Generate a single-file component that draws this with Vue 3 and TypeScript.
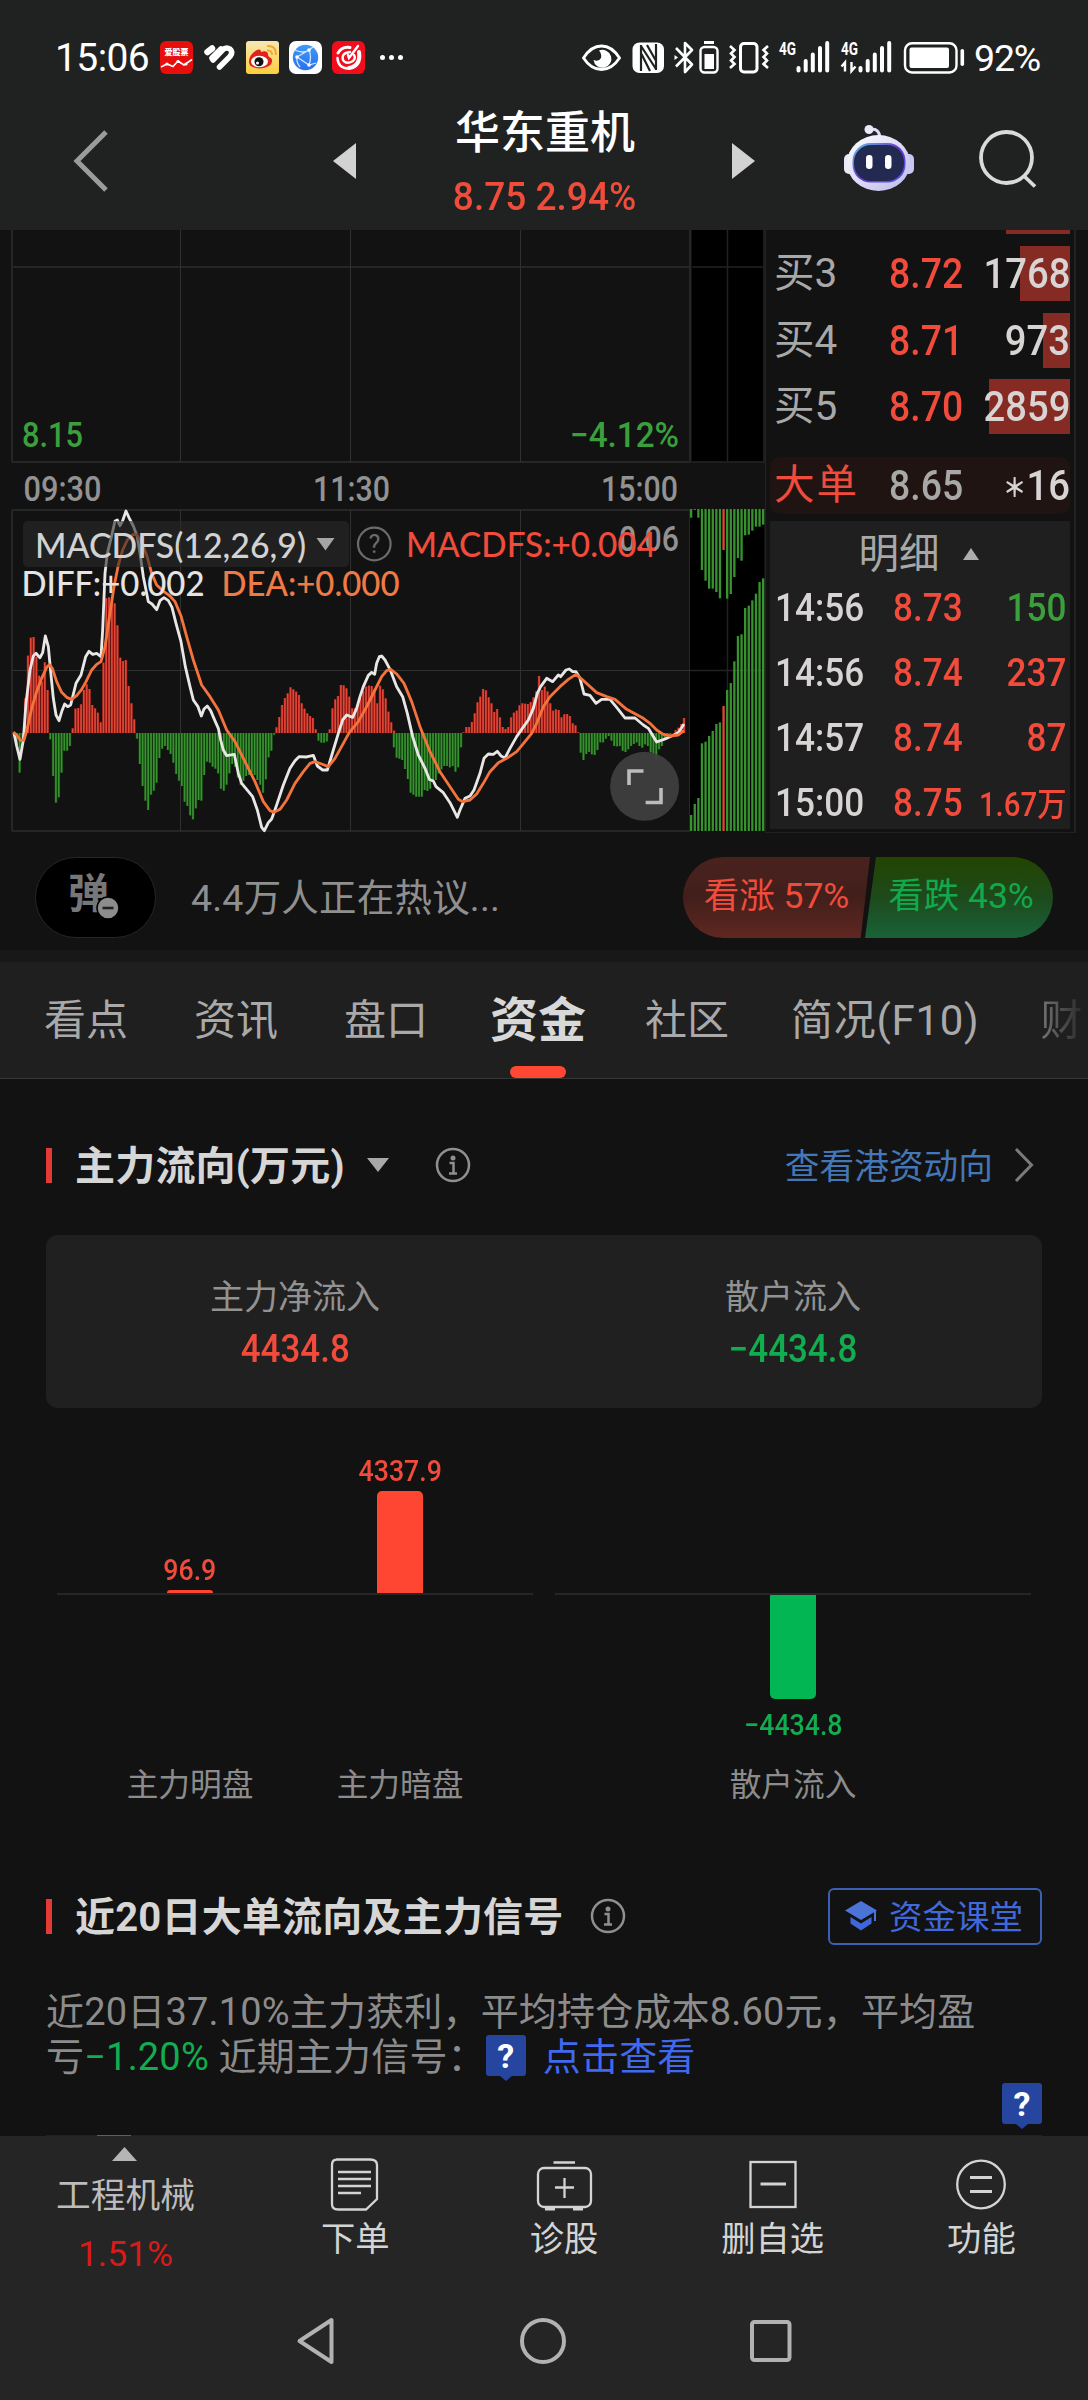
<template>
  <div class="phone">
    <!-- 系统状态栏 -->
    <div class="status-bar">
      <span class="clock">15:06</span>
      <svg class="notify-icons" width="246" height="36" viewBox="160 40 246 36">
        <defs>
          <linearGradient id="weiboBg" x1="0" y1="0" x2="0" y2="1">
            <stop offset="0" stop-color="#f7e7b5" />
            <stop offset="1" stop-color="#fdcf3c" />
          </linearGradient>
          <linearGradient id="globeBg" x1="0" y1="0" x2="0" y2="1">
            <stop offset="0" stop-color="#3f9bf5" />
            <stop offset="1" stop-color="#2a6ff0" />
          </linearGradient>
        </defs>
        <rect x="160" y="41" width="33" height="33" rx="6" fill="#e60f0c" />
        <text x="176.500" y="55" class="tiny-logo" text-anchor="middle">爱股票</text>
        <path d="M161 67 L167 64 L173 66.500 L178 61 L184 65 L192 59.500" fill="none" stroke="#fff" stroke-width="1.600" />
        <circle cx="167" cy="64" r="1.600" fill="#fff" />
        <circle cx="178" cy="61.500" r="1.600" fill="#fff" />
        <circle cx="186" cy="64" r="1.600" fill="#fff" />
        <g stroke="#fff" stroke-width="6.500" stroke-linecap="round" fill="none">
          <path d="M207.500 52 L212 48.500" />
          <path d="M212.500 58 L221 49.500" />
          <path d="M219.500 67 L230 56.500 Q233.500 52 230 49 Q226 46.500 222.500 50 L213 60" stroke-width="5.500" />
        </g>
        <rect x="246" y="41" width="33" height="33" rx="3" fill="url(#weiboBg)" />
        <path d="M249 62 Q249 55 256 50.500 Q261 48 261 52 Q267 50 268 54 Q268 57 271 58 Q274 62 269 66 Q262 70 254 67.500 Q249 66 249 62Z" fill="#e0211c" />
        <ellipse cx="259.500" cy="61.500" rx="8.500" ry="5.800" fill="#fff" />
        <circle cx="259" cy="61.800" r="4.500" fill="#111" />
        <circle cx="257.500" cy="63" r="1.500" fill="#fff" />
        <path d="M267 46 Q276 45 276 55 M267 50.500 Q272 50 272 55" fill="none" stroke="#f2a82b" stroke-width="2" />
        <rect x="289" y="41" width="33" height="33" rx="7" fill="#fff" />
        <circle cx="305.500" cy="57.500" r="12.700" fill="url(#globeBg)" />
        <path d="M295 50 Q303 54 309 50 L313 47 M309 50 Q312 57 309 65 M297 57 L309 65 L316 63 M297 57 L309 50 M297 57 Q296 62 300 67" fill="none" stroke="#cfe6ff" stroke-width="1.300" />
        <circle cx="309" cy="50" r="1.800" fill="#fff" />
        <circle cx="297" cy="57" r="1.800" fill="#fff" />
        <circle cx="309" cy="65" r="1.800" fill="#fff" />
        <rect x="332" y="41" width="33" height="33" rx="6" fill="#f20d1c" />
        <g fill="none" stroke="#fff" stroke-linecap="round">
          <path d="M338 53 Q342 46 350 47.500" stroke-width="3" />
          <path d="M337.500 58 Q338 68 348 68.500" stroke-width="2.500" />
          <path d="M359 52 Q361 66 349 68" stroke-width="4" />
          <path d="M350 52 Q341 53 343 60 Q346 65 353 61 Q356 58 354 55" stroke-width="2.400" />
          <path d="M358 46 L349 58 L348 55" stroke-width="2.400" />
        </g>
        <circle cx="382.500" cy="57.500" r="2.500" fill="#fff" />
        <circle cx="391.500" cy="57.500" r="2.500" fill="#fff" />
        <circle cx="400.500" cy="57.500" r="2.500" fill="#fff" />
      </svg>
      <svg class="system-icons" width="386" height="36" viewBox="580 40 386 36">
        <path d="M583.500 58 Q591 46 601.500 46 Q612 46 619.500 58 Q612 69.500 601.500 69.500 Q591 69.500 583.500 58Z" fill="none" stroke="#fff" stroke-width="2.800" />
        <path d="M599 50.500 A9 9 0 1 1 593.500 60 Q599 62 601 58 Q602 54 599 50.500Z" fill="#fff" />
        <rect x="632.500" y="42.500" width="31.500" height="30.500" rx="7" fill="#fff" />
        <path d="M641 45 V71 M656 44 V70 M641 46 L656 69 M641.500 54 L650 71 M647 45 L655.500 60" stroke="#202221" stroke-width="2.200" fill="none" />
        <path d="M676 48 L692 64.500 L685 72 V43 L692 50 L676 66.500" fill="none" stroke="#fff" stroke-width="2.600" stroke-linejoin="round" />
        <path d="M674.500 55 L678 57.500 L674.500 60Z" fill="#fff" />
        <rect x="700.500" y="47" width="17" height="25.500" rx="4" fill="none" stroke="#fff" stroke-width="2.400" />
        <rect x="704" y="41" width="10" height="3" fill="#fff" />
        <rect x="704.500" y="54" width="9.500" height="15" fill="#fff" />
        <rect x="740.500" y="43.500" width="16.500" height="28.500" rx="3.500" fill="none" stroke="#fff" stroke-width="3" />
        <path d="M730 46 L734.500 50 L731 53.500 L734.500 57 L731 60.500 L734.500 64 L730 68" fill="none" stroke="#fff" stroke-width="2.600" />
        <path d="M768 46 L763.500 50 L767 53.500 L763.500 57 L767 60.500 L763.500 64 L768 68" fill="none" stroke="#fff" stroke-width="2.600" />
        <g v-for="sig in signals" :key="sig" :transform="`translate(${sig} 0)`">
          <text x="0" y="55" class="net-label" textLength="17" lengthAdjust="spacingAndGlyphs">4G</text>
          <path d="M19.500 68 V70.500 M26.700 61 V70.500 M33.800 54.500 V70.500 M41 48 V70.500 M48.200 43 V70.500" stroke="#fff" stroke-width="4" stroke-linecap="round" />
        </g>
        <path d="M841.500 66.500 L845 62.500 V71.500 M855.500 66.500 L851.500 71 V62" fill="none" stroke="#fff" stroke-width="2.400" />
        <rect x="905" y="43.300" width="51.500" height="29.200" rx="7" fill="none" stroke="#fff" stroke-width="2.400" />
        <rect x="909.500" y="47.500" width="39.500" height="20.500" rx="2" fill="#fff" />
        <rect x="960.500" y="49" width="3.600" height="17" rx="1.800" fill="#fff" />
      </svg>
      <span class="battery">92%</span>
    </div>

    <!-- 标题栏 -->
    <div class="title-bar">
      <svg class="back" width="36" height="62" viewBox="0 0 36 62">
        <path d="M33 2 L4 31 L33 60" fill="none" stroke="#9b9b9b" stroke-width="5" />
      </svg>
      <svg class="prev" width="23" height="36" viewBox="0 0 23 36"><path d="M23 0 V36 L0 18Z" fill="#d2d2d2" /></svg>
      <div class="stock">
        <div class="stock-name">华东重机</div>
        <div class="stock-price"><span>8.75 2.94%</span></div>
      </div>
      <svg class="next" width="23" height="36" viewBox="0 0 23 36"><path d="M0 0 V36 L23 18Z" fill="#d2d2d2" /></svg>
      <svg class="robot" width="70" height="66" viewBox="0 0 70 66">
        <defs>
          <linearGradient id="shell" x1="0" y1="0" x2="1" y2="1">
            <stop offset="0" stop-color="#ffffff" />
            <stop offset="1" stop-color="#bcb8ec" />
          </linearGradient>
          <linearGradient id="visor" x1="0" y1="0" x2="1" y2="1">
            <stop offset="0" stop-color="#5fc8e8" />
            <stop offset="0.500" stop-color="#6a36c8" />
            <stop offset="1" stop-color="#4b5ae8" />
          </linearGradient>
        </defs>
        <path d="M25 5 Q35 2 36 13" fill="none" stroke="#dcdcf4" stroke-width="3" />
        <circle cx="25" cy="4.500" r="4.500" fill="#e8e8fa" />
        <rect x="0" y="29" width="12" height="20" rx="5" fill="#e8e8f8" />
        <rect x="58" y="29" width="12" height="20" rx="5" fill="#c8c6f2" />
        <ellipse cx="34.500" cy="38" rx="31.500" ry="28" fill="url(#shell)" />
        <rect x="8.500" y="18" width="53" height="39.500" rx="18" fill="url(#visor)" />
        <rect x="10" y="20" width="50" height="36" rx="17" fill="#232a52" />
        <rect x="22" y="30" width="6.500" height="14" rx="3.200" fill="#fff" />
        <rect x="41" y="30" width="6.500" height="14" rx="3.200" fill="#fff" />
      </svg>
      <svg class="search" width="60" height="60" viewBox="0 0 60 60">
        <circle cx="27.500" cy="28.500" r="25.500" fill="none" stroke="#dadada" stroke-width="3.800" />
        <path d="M45 47 L56 57.500" stroke="#dadada" stroke-width="3.800" />
      </svg>
    </div>

    <!-- 分时图与盘口 -->
    <div class="quote">
      <svg class="chart" width="765" height="608" viewBox="0 230 765 608">
        <g stroke="#262626" stroke-width="2" fill="none">
          <path d="M12 230 V462 M12 510 V831 M690 230 V462 M690 510 V831" />
          <path d="M12 267 H690 M12 462 H690 M12 510 H690 M12 831 H690" />
          <path d="M180.500 230 V462 M350.500 230 V462 M520.500 230 V462 M180.500 510 V831 M350.500 510 V831 M520.500 510 V831 M12 670.500 H690" stroke="#303030" stroke-width="1" />
        </g>
        <rect x="692" y="230" width="71" height="231" fill="#000" />
        <rect x="690" y="509" width="74" height="322" fill="#000" />
        <path d="M727.500 230 V461 M692 267 H763 M690 462 H765 M764 230 V462 M727.500 510 V831 M690 670.500 H764" stroke="#222" stroke-width="1.500" />
        <text x="22" y="447" class="axis green" textLength="61" lengthAdjust="spacingAndGlyphs">8.15</text>
        <text x="570" y="447" class="axis green" textLength="109" lengthAdjust="spacingAndGlyphs">−4.12%</text>
        <text x="23.500" y="500.500" class="axis" textLength="78" lengthAdjust="spacingAndGlyphs">09:30</text>
        <text x="313" y="500.500" class="axis" textLength="77" lengthAdjust="spacingAndGlyphs">11:30</text>
        <text x="601" y="500.500" class="axis" textLength="77" lengthAdjust="spacingAndGlyphs">15:00</text>

        <!-- MACD 区域，内部坐标为三倍精度 -->
        <g transform="translate(0 490) scale(0.33333)">
          <g v-for="b in macdBars" :key="b.x">
            <rect :x="b.x - 4.2" :y="b.y" width="8.400" :height="b.h" :class="b.up ? 'bar-up-dark' : 'bar-down-dark'" />
            <rect :x="b.x - 2.5" :y="b.y" width="5" :height="b.h" :class="b.up ? 'bar-up' : 'bar-down'" />
          </g>
          <g v-for="b in sideBars" :key="b.x">
            <rect :x="b.x - 3" y="57" width="7" :height="b.top - 57" :class="b.up ? 'bar-up' : 'bar-down'" />
            <rect :x="b.x - 3" :y="b.bottom" width="7" :height="1023 - b.bottom" :class="b.up ? 'bar-up' : 'bar-down'" />
          </g>
          <polyline :points="diffLine" fill="none" stroke="#e9e7e5" stroke-width="8.500" stroke-linejoin="round" />
          <polyline :points="deaLine" fill="none" stroke="#f4733c" stroke-width="8.500" stroke-linejoin="round" />
        </g>

        <rect x="23" y="521" width="326" height="46" rx="5" fill="#2a2a2a" fill-opacity="0.600" />
        <text x="35" y="558" class="macd light" textLength="271" lengthAdjust="spacingAndGlyphs">MACDFS(12,26,9)</text>
        <path d="M316.500 538 H334.500 L325.500 550.500Z" fill="#a5a5a5" />
        <circle cx="374.300" cy="544" r="16.300" fill="none" stroke="#6c6c6c" stroke-width="2.200" />
        <text x="374.300" y="553" class="question" text-anchor="middle">?</text>
        <text x="619" y="551" class="axis" textLength="60" lengthAdjust="spacingAndGlyphs">0.06</text>
        <text x="406" y="557" class="macd red" textLength="250" lengthAdjust="spacingAndGlyphs">MACDFS:+0.004</text>
        <text x="21.500" y="596" class="macd white" textLength="183" lengthAdjust="spacingAndGlyphs">DIFF:+0.002</text>
        <text x="221.500" y="596" class="macd orange" textLength="178" lengthAdjust="spacingAndGlyphs">DEA:+0.000</text>
        <circle cx="644.600" cy="786.300" r="34.500" fill="#404040" fill-opacity="0.930" />
        <path d="M629 785 V771 H643.500 M645.600 802.500 H661 V788" fill="none" stroke="#bcbcbc" stroke-width="3.600" />
      </svg>

      <div class="order-book">
        <div class="depth-peek"></div>
        <div v-for="o in bids" :key="o.label" class="bid">
          <span class="bid-label">{{ o.label }}</span>
          <span class="num red">{{ o.price }}</span>
          <i class="depth" :style="{ width: o.depth + 'px' }"></i>
          <span class="num right vol">{{ o.volume }}</span>
        </div>
        <div class="bid big-order">
          <span class="bid-label red">大单</span>
          <span class="num grey">8.65</span>
          <span class="num right vol"><small>＊</small>16</span>
        </div>
        <div class="ticks">
          <div class="ticks-head">
            明细
            <svg width="16" height="12" viewBox="0 0 16 12"><path d="M0 12 L8 0 L16 12Z" fill="#adadad" /></svg>
          </div>
          <div v-for="(t, i) in ticks" :key="i" class="tick">
            <span class="num vol">{{ t.time }}</span>
            <span class="num red">{{ t.price }}</span>
            <span class="num right" :class="[t.down ? 'green' : 'red', { small: t.small }]">{{ t.volume }}</span>
          </div>
        </div>
      </div>
    </div>

    <!-- 热议 / 涨跌投票 -->
    <div class="discuss">
      <div class="danmu">
        弹
        <svg class="danmu-off" width="24" height="24" viewBox="0 0 24 24">
          <circle cx="12" cy="12" r="11" fill="#8d8d8d" stroke="#000" stroke-width="1.500" />
          <path d="M6.500 12 H17.500" stroke="#222" stroke-width="2.600" />
        </svg>
      </div>
      <span class="discuss-text">4.4万人正在热议...</span>
      <div class="vote">
        <div class="vote-up">看涨 57%</div>
        <div class="vote-down">看跌 43%</div>
      </div>
    </div>

    <div class="tabs">
      <div v-for="tab in tabs" :key="tab" class="tab" :class="{ active: tab === activeTab, last: tab === '财' }" @click="activeTab = tab">
        {{ tab }}
      </div>
    </div>

    <div class="content">
      <div class="section-title first">
        <i class="mark"></i>
        <h2>主力流向(万元)</h2>
        <svg class="caret" width="22" height="14" viewBox="0 0 22 14"><path d="M0 0 H22 L11 14Z" fill="#a8a8a8" /></svg>
        <svg class="info" width="36" height="36" viewBox="0 0 36 36">
          <circle cx="18" cy="18" r="16" fill="none" stroke="#8f8f8f" stroke-width="2.500" />
          <circle cx="18" cy="11" r="2.500" fill="#8f8f8f" />
          <path d="M14.500 16 H18.500 V26 M14 26.500 H22" fill="none" stroke="#8f8f8f" stroke-width="2.500" />
        </svg>
        <a class="hk-link">查看港资动向</a>
        <svg class="arrow" width="20" height="34" viewBox="0 0 20 34"><path d="M2 1 L17.500 17 L2 33" fill="none" stroke="#7a7a7a" stroke-width="3" /></svg>
      </div>

      <div class="summary">
        <div v-for="s in summary" :key="s.label" class="summary-item">
          <div class="summary-label">{{ s.label }}</div>
          <div class="summary-value" :class="s.down ? 'jade' : 'red'"><span>{{ s.value }}</span></div>
        </div>
      </div>

      <div class="flow-chart">
        <div v-for="(group, gi) in flowGroups" :key="gi" class="flow-group">
          <div class="flow-row flow-up">
            <div v-for="f in group" :key="f.label" class="flow-col">
              <template v-if="f.value > 0">
                <span class="flow-value red">{{ f.text }}</span>
                <i class="flow-bar up" :style="{ height: barHeight(f.value) + 'px' }"></i>
              </template>
            </div>
          </div>
          <div class="flow-row flow-down">
            <div v-for="f in group" :key="f.label" class="flow-col">
              <template v-if="f.value < 0">
                <i class="flow-bar down" :style="{ height: barHeight(f.value) + 'px' }"></i>
                <span class="flow-value jade">{{ f.text }}</span>
              </template>
            </div>
          </div>
          <div class="flow-row">
            <div v-for="f in group" :key="f.label" class="flow-col flow-label">{{ f.label }}</div>
          </div>
        </div>
      </div>

      <div class="section-title second">
        <i class="mark"></i>
        <h2>近20日大单流向及主力信号</h2>
        <svg class="info" width="36" height="36" viewBox="0 0 36 36">
          <circle cx="18" cy="18" r="16" fill="none" stroke="#8f8f8f" stroke-width="2.500" />
          <circle cx="18" cy="11" r="2.500" fill="#8f8f8f" />
          <path d="M14.500 16 H18.500 V26 M14 26.500 H22" fill="none" stroke="#8f8f8f" stroke-width="2.500" />
        </svg>
        <div class="course">
          <svg width="32" height="30" viewBox="0 0 32 30">
            <path d="M16 0 L32 9.500 L16 19 L0 9.500Z" fill="#4c74d8" />
            <path d="M5.500 16 L16 22.500 L26.500 16 V22.500 L16 29.500 L5.500 22.500Z" fill="#3d68dc" />
            <path d="M30 10 V20" stroke="#4c74d8" stroke-width="2" />
          </svg>
          <span>资金课堂</span>
        </div>
      </div>

      <p class="brief">
        近20日37.10%主力获利，平均持仓成本8.60元，平均盈<br />亏<b class="jade">−1.20%</b> 近期主力信号：<span class="badge inline">?</span><a>点击查看</a>
      </p>
      <div class="badge-row"><span class="badge">?</span></div>
      <div class="next-chart"><i></i></div>
    </div>

    <!-- 底部操作栏 -->
    <div class="bottom-bar">
      <div class="sector">
        <svg width="25" height="14" viewBox="0 0 25 14"><path d="M0 14 L12.500 0 L25 14Z" fill="#b5b5b5" /></svg>
        <div class="sector-name">工程机械</div>
        <div class="sector-change">1.51%</div>
      </div>
      <div class="action">
        <svg width="60" height="56" viewBox="0 0 60 56" class="line-icon">
          <path d="M11 3.500 H45 Q52 3.500 52 9 V43 L41 53.500 H13 Q7 53.500 7 48 V9 Q7 3.500 12 3.500Z" />
          <path d="M13 16 H46 M13 23 H46 M13 30 H46 M13 37 H36" />
        </svg>
        下单
      </div>
      <div class="action">
        <svg width="60" height="56" viewBox="0 0 60 56" class="line-icon">
          <rect x="4" y="12" width="53" height="39" rx="6" />
          <path d="M19.500 6.500 H41 M30.500 22 V42 M21 31.500 H40" />
          <path d="M11 53 H21 M39 53 H49" stroke-width="3" />
        </svg>
        诊股
      </div>
      <div class="action">
        <svg width="60" height="56" viewBox="0 0 60 56" class="line-icon">
          <rect x="7.500" y="6" width="45" height="45" />
          <path d="M17.500 28 H43" stroke-width="3" />
        </svg>
        删自选
      </div>
      <div class="action">
        <svg width="60" height="56" viewBox="0 0 60 56" class="line-icon">
          <circle cx="30" cy="28.500" r="23.800" />
          <path d="M19 21.500 H41 M19 35.500 H41" stroke-width="2.800" />
        </svg>
        功能
      </div>
    </div>

    <div class="system-nav">
      <svg width="40" height="48" viewBox="0 0 40 48"><path d="M35.500 3 V45 L3.500 24Z" stroke-linejoin="round" /></svg>
      <svg width="46" height="46" viewBox="0 0 46 46"><circle cx="23" cy="23" r="21" /></svg>
      <svg width="42" height="44" viewBox="0 0 42 44"><rect x="2" y="3" width="37.500" height="38" rx="2.500" /></svg>
    </div>
  </div>
</template>

<script setup lang="ts">
import { ref } from 'vue';

interface Flow {
  label: string;
  value: number;
  text: string;
}

const signals = [779, 841];

const bids = [
  { label: '买3', price: '8.72', volume: '1768', depth: 50 },
  { label: '买4', price: '8.71', volume: '973', depth: 27 },
  { label: '买5', price: '8.70', volume: '2859', depth: 81 }
];

const ticks = [
  { time: '14:56', price: '8.73', volume: '150', down: true, small: false },
  { time: '14:56', price: '8.74', volume: '237', down: false, small: false },
  { time: '14:57', price: '8.74', volume: '87', down: false, small: false },
  { time: '15:00', price: '8.75', volume: '1.67万', down: false, small: true }
];

const tabs = ['看点', '资讯', '盘口', '资金', '社区', '简况(F10)', '财'];
const activeTab = ref('资金');

const summary = [
  { label: '主力净流入', value: '4434.8', down: false },
  { label: '散户流入', value: '−4434.8', down: true }
];

const flowGroups: Flow[][] = [
  [
    { label: '主力明盘', value: 96.9, text: '96.9' },
    { label: '主力暗盘', value: 4337.9, text: '4337.9' }
  ],
  [{ label: '散户流入', value: -4434.8, text: '−4434.8' }]
];

const barHeight = (value: number) => Math.max(3, Math.round((Math.abs(value) / 4434.8) * 104));

// MACD 柱：每段给出起始横坐标和逐根柱顶
const ZERO = 729;
const STEP = 8.4;
const segments: { x: number; ys: number[] }[] = [
  { x: 42, ys: [735, 765, 848, 752, 625, 497, 443, 441, 500, 557, 575, 517, 600] },
  { x: 151, ys: [748, 858, 938, 922, 848, 782, 782, 768] },
  { x: 218, ys: [715, 656, 654, 643, 600, 583, 597, 645, 655, 668, 697, 518, 325, 322, 325, 340, 406, 503, 513, 510, 588, 640, 688] },
  { x: 411, ys: [746, 822, 888, 932, 960, 914, 902, 878, 804, 776, 768, 780, 792, 818, 852, 872, 888, 935, 948, 976, 988, 955, 930, 932, 855, 815, 818, 830, 836, 850, 896, 902, 884, 850, 822, 830, 862, 884, 872, 858, 855, 848, 855, 870, 884, 908, 868, 802, 782, 734] },
  { x: 829.5, ys: [712, 681, 645, 624, 610, 592, 598, 605, 615, 640, 656, 670, 678, 684, 718] },
  { x: 955.5, ys: [752, 758, 758, 754] },
  { x: 989, ys: [718, 655, 628, 618, 585, 586, 595, 620, 655, 655, 645, 625, 603, 590, 587, 588, 598, 640, 587, 598, 625, 665, 697, 722] },
  { x: 1181.5, ys: [772, 803, 806, 810, 837, 867, 908, 914, 920, 920, 920, 900, 903, 896, 870, 870, 850, 838, 828, 828, 832, 828, 845, 832, 772] },
  { x: 1390.5, ys: [727, 711, 711, 696, 670, 637, 620, 597, 601, 622, 640, 666, 657, 682, 711, 717, 711, 682, 668, 662, 646, 640, 641, 642, 636, 622, 604, 558, 600, 590, 604, 640, 662, 658, 660, 682, 673, 672, 678, 700, 706, 727] },
  { x: 1742, ys: [788, 810, 792, 786, 793, 795, 780, 757, 757, 746, 738, 752, 768, 769, 768, 782, 786, 778, 768, 762, 757, 768, 773, 763, 768, 787, 792, 808, 778, 768, 745, 738, 733] },
  { x: 2027, ys: [720, 713, 702, 684] }
];

const macdBars = segments.flatMap((s) =>
  s.ys.map((y, i) => ({
    x: s.x + i * STEP,
    y: Math.min(y, ZERO),
    h: Math.abs(y - ZERO),
    up: y < ZERO
  }))
);

// 盘后时段
const sideTop = [83, 60, 83, 240, 272, 296, 296, 306, 325, 180, 326, 312, 261, 204, 212, 136, 134, 122, 110, 110, 104];
const sideBottom = [975, 942, 924, 760, 755, 738, 723, 702, 697, 648, 600, 579, 514, 438, 433, 354, 347, 331, 311, 276, 265];
const sideBars = sideTop.map((top, i) => ({
  x: 2073 + i * 10.8,
  top,
  bottom: sideBottom[i],
  up: i === 9
}));

const diffLine =
  '42,729 50,768 60,808 70,750 78,640 90,540 100,498 108,490 120,503 128,488 136,438 145,470 152,545 160,625 168,675 177,692 186,662 194,642 203,650 212,645 ' +
  '228,580 243,555 257,500 267,484 278,493 290,490 303,500 308,420 315,250 322,190 332,150 345,93 352,90 360,107 368,92 378,63 388,85 400,108 412,140 420,190 ' +
  '430,260 445,335 456,342 470,359 480,332 492,323 505,332 516,352 528,400 543,455 556,530 570,590 580,630 594,650 604,678 612,657 622,648 632,662 643,688 ' +
  '655,715 662,750 670,780 680,797 703,793 715,850 725,880 740,898 758,920 772,960 785,1012 793,1022 805,998 815,987 830,945 850,885 870,835 885,812 897,800 ' +
  '920,801 940,796 952,828 968,840 982,840 1000,780 1015,730 1028,690 1040,675 1058,682 1070,655 1080,620 1090,590 1105,556 1115,547 1124,553 1130,520 ' +
  '1138,500 1145,498 1155,510 1170,538 1190,590 1208,620 1222,670 1238,740 1255,795 1275,835 1288,868 1300,873 1308,890 1330,908 1350,938 1365,968 1372,982 ' +
  '1380,960 1395,925 1410,918 1422,900 1440,850 1452,805 1465,792 1480,793 1492,784 1503,798 1515,804 1530,775 1550,740 1567,715 1585,690 1600,655 1612,610 ' +
  '1622,590 1640,565 1658,575 1675,555 1682,560 1698,540 1708,537 1718,545 1728,545 1740,565 1752,612 1770,616 1788,640 1805,628 1830,628 1850,652 1875,684 ' +
  '1905,684 1930,705 1945,715 1970,756 2000,745 2015,738 2035,728 2052,702';

const deaLine =
  '40,726 50,735 62,752 72,750 82,715 95,655 110,605 125,565 140,532 148,524 157,535 170,575 185,607 200,622 215,628 230,617 245,598 258,575 275,540 290,523 ' +
  '303,515 315,470 330,370 342,290 355,225 368,180 382,150 398,134 410,134 425,158 440,195 455,250 470,285 492,305 510,318 525,335 543,378 560,440 580,510 ' +
  '605,585 630,620 655,660 680,720 705,755 735,815 765,875 790,935 810,962 822,967 840,958 860,930 885,880 910,845 930,820 945,815 965,822 985,830 1005,805 ' +
  '1030,760 1048,727 1075,695 1100,650 1125,600 1145,560 1160,542 1172,538 1190,552 1212,580 1235,635 1260,710 1290,785 1320,845 1350,890 1375,928 1388,935 ' +
  '1410,930 1430,912 1450,880 1470,845 1495,818 1520,805 1550,785 1575,755 1595,730 1610,700 1630,650 1650,620 1680,590 1705,568 1728,553 1745,567 1790,608 ' +
  '1820,620 1845,628 1880,658 1930,685 1950,700 1970,720 1990,733 2010,738 2035,735 2052,722';
</script>

<style>
body {
  background: #121212;
}
</style>

<style scoped>
.phone {
  width: 1088px;
  height: 2400px;
  overflow: hidden;
  display: flex;
  flex-direction: column;
  background: #121212;
  color: #d6d6d6;
  font-family: Roboto, 'Noto Sans CJK SC', sans-serif;
}

.phone svg {
  display: block;
  flex: none;
}

.red {
  color: #f04b3b;
  fill: #f04b3b;
}

.green {
  color: #3ba03c;
  fill: #3ba03c;
}

.jade {
  color: #12ad50;
}

.grey {
  color: #a8a8a8;
}

/* 状态栏 */
.status-bar {
  height: 115px;
  flex: none;
  display: flex;
  align-items: center;
  background: #202221;
  color: #fff;
}

.status-bar svg {
  overflow: visible;
}

.clock {
  width: 105px;
  padding-left: 55px;
  box-sizing: content-box;
  font-size: 39px;
  letter-spacing: -0.6px;
}

.system-icons {
  margin-left: 174px;
}

.battery {
  margin-left: 8px;
  font-size: 37.5px;
  letter-spacing: -1.2px;
}

.tiny-logo {
  font-size: 8px;
  font-weight: 900;
  fill: #fff;
}

.net-label {
  font-size: 19px;
  font-weight: 700;
  fill: #fff;
}

/* 标题栏 */
.title-bar {
  height: 115px;
  flex: none;
  display: flex;
  background: #202221;
}

.back {
  margin: 15px 0 0 73px;
}

.prev {
  margin: 28px 0 0 224px;
}

.stock {
  width: 184px;
  margin-left: 97px;
  text-align: center;
}

.stock-name {
  height: 60px;
  line-height: 38px;
  font-size: 45px;
  font-weight: 500;
  color: #fff;
  white-space: nowrap;
}

.stock-price {
  line-height: 44px;
  font-size: 39px;
  font-weight: 500;
  color: #ef4c3b;
  white-space: nowrap;
}

.stock-price span {
  display: inline-block;
  margin: 0 -20px;
  transform: scaleX(0.95);
}

.next {
  margin: 28px 0 0 95px;
}

.robot {
  margin: 10px 0 0 89px;
}

.search {
  margin: 14px 0 0 65px;
}

/* 行情图 */
.quote {
  height: 608px;
  flex: none;
  display: flex;
}

.axis {
  font-size: 35px;
  fill: #929292;
  font-weight: 500;
}

.axis.green {
  fill: #3ba03c;
}

.macd {
  font-family: Lato, Roboto, sans-serif;
  font-size: 34.5px;
  font-weight: 500;
}

.light {
  fill: #d2d2d2;
}

.white {
  fill: #e4e4e4;
}

.orange {
  fill: #f07a45;
}

.question {
  font-size: 25px;
  fill: #6c6c6c;
}

.bar-up {
  fill: #e34537;
}

.bar-up-dark {
  fill: #7a1a12;
}

.bar-down {
  fill: #38922f;
}

.bar-down-dark {
  fill: #12400f;
}

/* 盘口 */
.order-book {
  width: 311px;
  height: 603px;
  box-sizing: border-box;
  padding: 0 4px;
  border: solid #222;
  border-width: 0 2px 1px 1px;
}

.depth-peek {
  height: 3.5px;
  width: 64px;
  margin: 0 0 12.5px auto;
  background: #852b24;
}

.bid {
  position: relative;
  display: grid;
  grid-template-columns: 119px 86px 95px;
  height: 55px;
  margin-bottom: 11.7px;
  font-size: 42px;
  line-height: 55px;
  white-space: nowrap;
}

.bid-label {
  padding-left: 4px;
  font-size: 40.5px;
  color: #a8a8a8;
}

.bid-label.red {
  color: #f04b3b;
  letter-spacing: 2px;
}

.num {
  display: block;
  font-weight: 500;
  transform: scaleX(0.89);
  transform-origin: left center;
}

.num.right {
  position: relative;
  text-align: right;
  transform-origin: right center;
}

.bid .num.right {
  transform: scaleX(0.91);
}

.vol {
  color: #d8d4d4;
}

.depth {
  position: absolute;
  right: 0;
  top: 0;
  height: 55px;
  background: #852b24;
}

.big-order {
  height: 57px;
  line-height: 57px;
  margin: 23px 0 7px;
  border-radius: 10px;
  background: #201413;
}

.big-order small {
  font-size: 26px;
  font-weight: 700;
  vertical-align: 3px;
}

.ticks {
  height: 308px;
  background: #1f1f1f;
}

.ticks-head {
  height: 53px;
  display: flex;
  align-items: center;
  justify-content: center;
  gap: 23px;
  padding: 6px 0 0 0;
  font-size: 40.5px;
  line-height: 56px;
  color: #a8a8a8;
  text-indent: -3px;
}

.tick {
  display: grid;
  grid-template-columns: 118px 72px 101.5px;
  height: 65px;
  padding-left: 5px;
  font-size: 39.5px;
  line-height: 55px;
  white-space: nowrap;
}

.num.small {
  font-size: 33px;
  line-height: 59px;
}

/* 热议 */
.discuss {
  height: 112px;
  flex: none;
  display: flex;
  padding: 19px 35px 0;
  box-sizing: border-box;
}

.danmu {
  position: relative;
  width: 121px;
  height: 81px;
  box-sizing: border-box;
  border: 1px solid #262626;
  border-radius: 41px;
  background: #000;
  padding-left: 32px;
  font-size: 41px;
  font-weight: 700;
  line-height: 73px;
  color: #777;
}

.danmu-off {
  position: absolute;
  left: 60px;
  top: 38px;
}

.discuss-text {
  margin-left: 35px;
  font-size: 37.5px;
  letter-spacing: 0.2px;
  line-height: 82px;
  color: #8f8f8f;
}

.vote {
  display: flex;
  width: 370px;
  height: 81px;
  margin-left: auto;
  border-radius: 41px;
  overflow: hidden;
  font-size: 35.5px;
  line-height: 79px;
  text-align: center;
}

.vote-up {
  width: 187px;
  flex: none;
  background: linear-gradient(#49221e, #421f1b 50%, #602721);
  clip-path: polygon(0 0, 100% 0, 95% 100%, 0 100%);
  color: #f04b3b;
}

.vote-down {
  width: 188px;
  flex: none;
  box-sizing: border-box;
  margin-left: -5px;
  padding-left: 4px;
  background: linear-gradient(#234400, #1d4a1c 50%, #1a6239);
  clip-path: polygon(11px 0, 100% 0, 100% 100%, 0 100%);
  color: #12a84c;
}

/* 标签栏 */
.tabs {
  height: 129px;
  flex: none;
  box-sizing: border-box;
  display: flex;
  align-items: center;
  padding-left: 44px;
  border-top: 12px solid #181818;
  border-bottom: 1px solid #363636;
  background: #1f1f1f;
  font-size: 42px;
  color: #a9a9a9;
  white-space: nowrap;
}

.tab {
  position: relative;
  height: 116px;
  line-height: 118px;
  margin-right: 66px;
}

.tab.active {
  margin: 0 59px 0 -4px;
  font-size: 48px;
  font-weight: 700;
  color: #d8d8d8;
}

.tab:nth-child(5) {
  margin-right: 62px;
}

.tab:nth-child(6) {
  letter-spacing: 0.7px;
  margin-right: 61px;
}

.tab.active::after {
  content: '';
  position: absolute;
  left: 50%;
  bottom: 0;
  width: 56px;
  height: 12px;
  margin-left: -28px;
  border-radius: 6px;
  background: #ff4733;
}

.tab.last {
  margin-right: 0;
  background: linear-gradient(90deg, #777, #2a2a2a);
  background-clip: text;
  -webkit-background-clip: text;
  color: transparent;
}

/* 资金内容 */
.content {
  height: 1057px;
  flex: none;
  padding: 0 46px;
}

.section-title {
  display: flex;
  align-items: center;
}

.section-title.first {
  height: 60px;
  padding: 56px 0 0;
}

.mark {
  width: 6px;
  height: 35px;
  background: #e23a34;
}

h2 {
  margin: 3px 0 0 23px;
  font-size: 40px;
  letter-spacing: 0.2px;
  font-weight: 700;
  line-height: 60px;
  color: #d6d6d6;
  white-space: nowrap;
}

.caret {
  margin-left: 22px;
}

.info {
  margin-left: 46px;
}

.second .info {
  margin-left: 26px;
}

.hk-link {
  margin: -2px 0 0 auto;
  font-size: 34.7px;
  color: #4377b8;
}

.arrow {
  margin: 0 8px 0 21px;
}

.summary {
  display: flex;
  height: 173px;
  margin-top: 40px;
  border-radius: 12px;
  background: #202020;
}

.summary-item {
  flex: 1;
  padding-top: 37px;
  text-align: center;
}

.summary-label {
  font-size: 34px;
  line-height: 50px;
  color: #929292;
}

.summary-value {
  font-size: 38px;
  font-weight: 500;
  line-height: 54px;
}

.summary-value span {
  display: inline-block;
  transform: scaleX(0.92);
}

.flow-chart {
  display: flex;
  gap: 22px;
  margin: 0 11px;
  padding-top: 32px;
}

.flow-group {
  width: 476px;
}

.flow-row {
  display: flex;
  justify-content: center;
  padding: 0 28px;
}

.flow-col {
  width: 210px;
  display: flex;
  flex-direction: column;
  align-items: center;
}

.flow-up {
  height: 153px;
  border-bottom: 2px solid #262626;
}

.flow-up .flow-col {
  justify-content: flex-end;
}

.flow-down {
  height: 164px;
}

.flow-bar {
  width: 46px;
  background: #ff4633;
}

.flow-bar.up {
  border-radius: 5px 5px 0 0;
}

.flow-bar.down {
  border-radius: 0 0 5px 5px;
  background: #02b653;
}

.flow-value {
  font-size: 29px;
  font-weight: 500;
  line-height: 39px;
  transform: scaleX(0.92);
}

.flow-down .flow-value {
  margin-top: 7px;
}

.flow-label {
  font-size: 31.7px;
  line-height: 53px;
  height: 46px;
  color: #8c8c8c;
}

.section-title.second {
  margin-top: 82px;
  height: 58px;
}

.course {
  display: flex;
  align-items: center;
  gap: 12px;
  width: 214px;
  height: 57px;
  box-sizing: border-box;
  margin-left: auto;
  padding-left: 15px;
  border: 2px solid #3b5fb4;
  border-radius: 6px;
  font-size: 33.5px;
  color: #4069dd;
}

.course span {
  margin-top: -4px;
}

.brief {
  height: 90px;
  margin: 45px 0 0;
  font-size: 38px;
  letter-spacing: 0.18px;
  line-height: 45px;
  color: #8c8c8c;
  white-space: nowrap;
}

.brief b {
  font-weight: 400;
}

.brief a {
  margin-left: 17px;
  color: #4169ee;
}

.badge {
  position: relative;
  display: inline-block;
  width: 40px;
  height: 41px;
  border-radius: 3px;
  background: #26459f;
  font-size: 34px;
  font-weight: 700;
  line-height: 43px;
  text-align: center;
  color: #fff;
}

.badge::after {
  content: '';
  position: absolute;
  left: 14px;
  top: 41px;
  border: solid transparent;
  border-width: 5px 6px 0;
  border-top-color: #26459f;
}

.badge.inline {
  margin: -6px 0 0;
  vertical-align: 2px;
}

.badge-row {
  height: 52px;
  display: flex;
  justify-content: flex-end;
  margin-top: 3px;
}

.next-chart {
  height: 1px;
  background: #202020;
}

.next-chart i {
  display: block;
  width: 34px;
  height: 1px;
  margin-left: 51px;
  background: #a04440;
}

/* 底部 */
.bottom-bar {
  height: 144px;
  flex: none;
  display: flex;
  background: #252525;
}

.sector {
  width: 251px;
  padding-top: 11px;
  text-align: center;
}

.sector svg {
  margin-left: 112px;
}

.sector-name {
  height: 66px;
  line-height: 71px;
  font-size: 34.7px;
  color: #bcbcbc;
}

.sector-change {
  line-height: 54px;
  font-size: 35.5px;
  color: #d91a18;
}

.action {
  width: 208.7px;
  display: flex;
  flex-direction: column;
  align-items: center;
  padding-top: 20px;
  font-size: 34.3px;
  line-height: 55px;
  color: #d4d4d4;
}

.line-icon {
  fill: none;
  stroke: #d4d4d4;
  stroke-width: 2.3;
}

.system-nav {
  flex: 1;
  display: flex;
  align-items: center;
  gap: 184px;
  padding: 2px 0 0 296px;
  background: #252525;
}

.system-nav svg {
  fill: none;
  stroke: #b2b2b2;
  stroke-width: 4;
}
</style>
